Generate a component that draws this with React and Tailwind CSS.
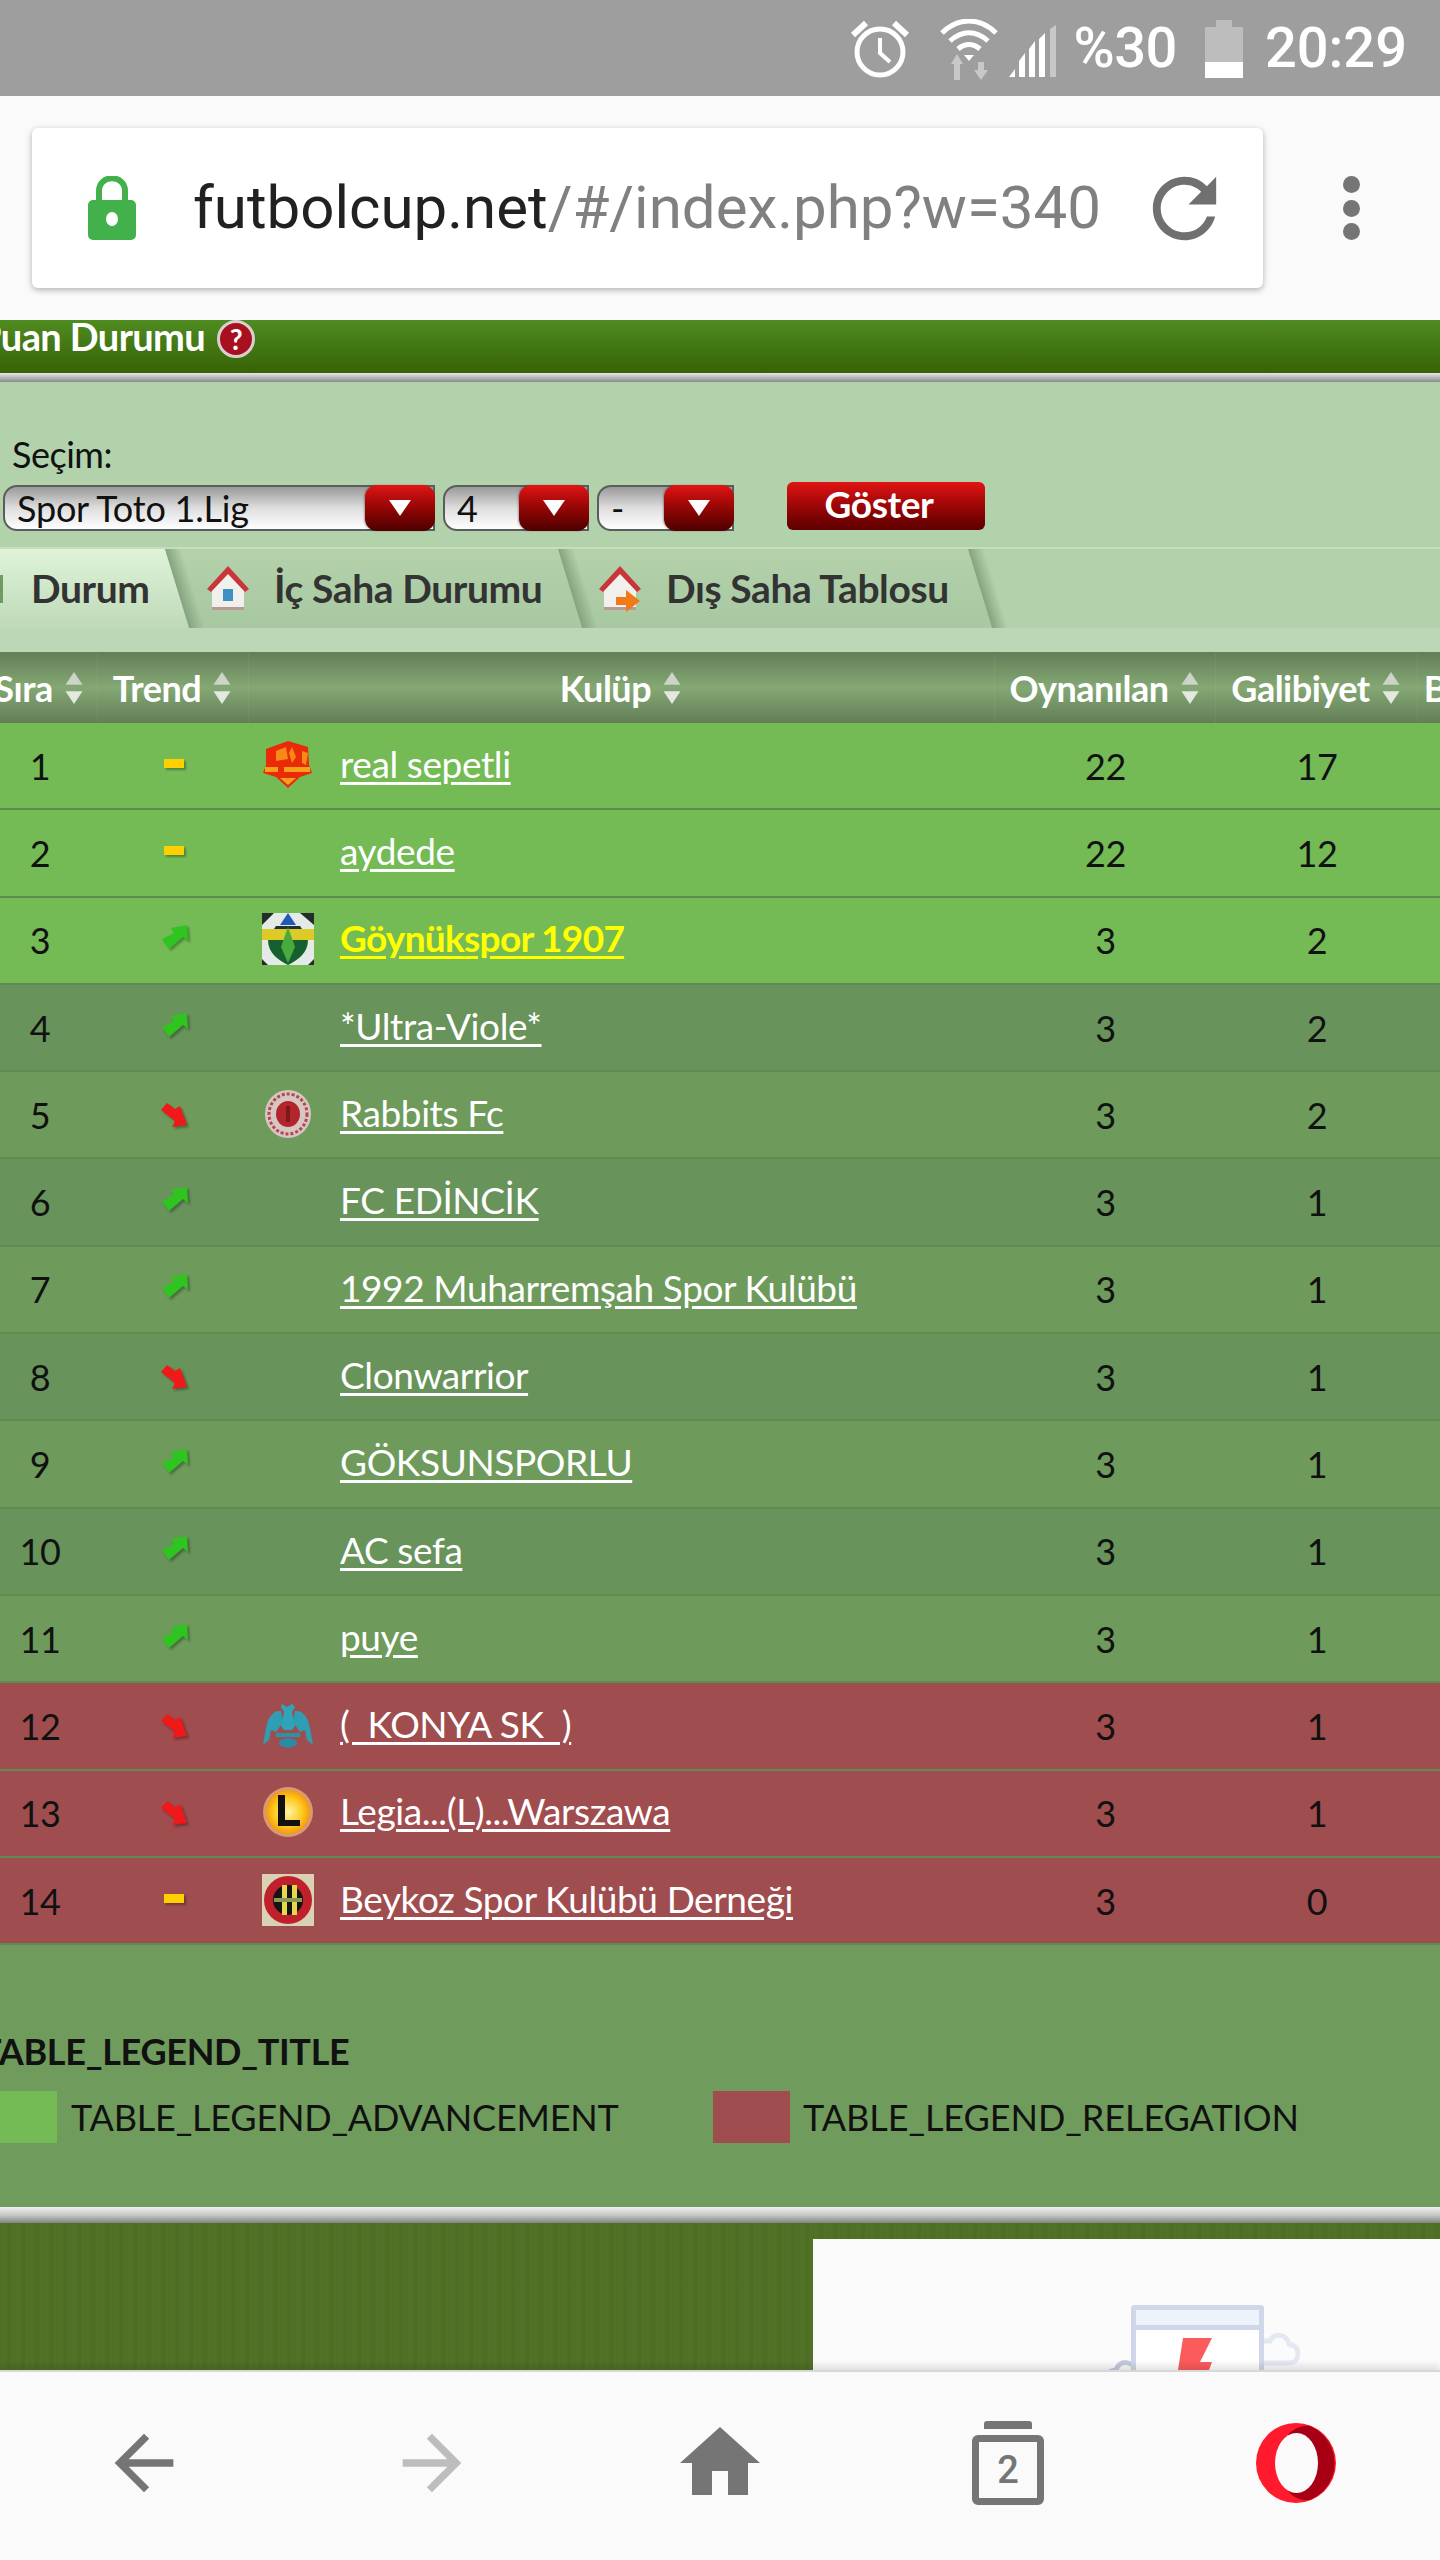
import React from "react";

const rows = [
  { n: 1, trend: "same", crest: "real", name: "real sepetli", o: 22, g: 17, bg: "bg-[#74bb56]" },
  { n: 2, trend: "same", name: "aydede", o: 22, g: 12, bg: "bg-[#74bb56]" },
  { n: 3, trend: "up", crest: "goynuk", name: "Göynükspor 1907", o: 3, g: 2, bg: "bg-[#74bb56]", me: true },
  { n: 4, trend: "up", name: "*Ultra-Viole*", o: 3, g: 2, bg: "bg-[#68935a]" },
  { n: 5, trend: "down", crest: "rabbits", name: "Rabbits Fc", o: 3, g: 2, bg: "bg-[#6e9b5b]" },
  { n: 6, trend: "up", name: "FC EDİNCİK", o: 3, g: 1, bg: "bg-[#68935a]" },
  { n: 7, trend: "up", name: "1992 Muharremşah Spor Kulübü", o: 3, g: 1, bg: "bg-[#6e9b5b]" },
  { n: 8, trend: "down", name: "Clonwarrior", o: 3, g: 1, bg: "bg-[#68935a]" },
  { n: 9, trend: "up", name: "GÖKSUNSPORLU", o: 3, g: 1, bg: "bg-[#6e9b5b]" },
  { n: 10, trend: "up", name: "AC sefa", o: 3, g: 1, bg: "bg-[#68935a]" },
  { n: 11, trend: "up", name: "puye", o: 3, g: 1, bg: "bg-[#6e9b5b]" },
  { n: 12, trend: "down", crest: "konya", name: "(  KONYA SK  )", o: 3, g: 1, bg: "bg-[#9f4d4f]" },
  { n: 13, trend: "down", crest: "legia", name: "Legia...(L)...Warszawa", o: 3, g: 1, bg: "bg-[#9f4d4f]" },
  { n: 14, trend: "same", crest: "beykoz", name: "Beykoz Spor Kulübü Derneği", o: 3, g: 0, bg: "bg-[#9f4d4f]" },
];

function SortIcon() {
  return (
    <svg width="22" height="34" viewBox="0 0 20 32" className="shrink-0 blur-[0.5px]">
      <path d="M10 1 L18 13 H2 Z" fill="#ccd3c8" />
      <path d="M10 31 L18 19 H2 Z" fill="#e4e8e0" />
    </svg>
  );
}

function Trend({ type }) {
  if (type === "same") {
    return <div className="w-[20px] h-[9px] bg-[#fdd000] shadow-[2px_2px_2px_rgba(0,0,0,0.3)] -mt-[4px]" />;
  }
  if (type === "up") {
    return (
      <svg width="28" height="26" viewBox="0 0 28 26" className="blur-[0.4px] drop-shadow-[2px_2px_1px_rgba(0,0,0,0.3)] -mt-[4px] ml-[3px]">
        <path d="M1 14 L13 8 L10 3 L26 0 L27 16 L22 12 L8 24 Z" fill="#2fc41f" />
      </svg>
    );
  }
  return (
    <svg width="28" height="26" viewBox="0 0 28 26" className="blur-[0.4px] drop-shadow-[2px_2px_1px_rgba(0,0,0,0.3)] -mt-[2px] ml-[3px]">
      <path d="M0 9 L6 2 L14 8 L19 5 L26 24 L11 26 L14 20 Z" fill="#f01818" />
    </svg>
  );
}

function Crest({ type }) {
  if (type === "real") {
    return (
      <svg width="52" height="48" viewBox="0 0 52 48" className="blur-[0.7px]">
        <path d="M4 8 L26 0 L46 6 L47 24 L50 32 L38 36 L26 47 L14 36 L1 32 L4 24 Z" fill="#ea2a08" />
        <path d="M14 10 L24 6 L26 18 L14 20 Z M30 6 L34 16 L30 22 L27 12 Z M40 10 L46 12 L44 24 L40 22 Z" fill="#f58a14" />
        <path d="M3 26 H16 V31 H3 Z M22 26 H48 V31 H22 Z M18 37 H34 L26 44 Z" fill="#f7a01c" />
      </svg>
    );
  }
  if (type === "goynuk") {
    return (
      <svg width="52" height="52" viewBox="0 0 52 52" className="blur-[0.6px]">
        <rect width="52" height="52" fill="#e4eae6" />
        <path d="M0 0 H12 L0 12 Z M52 0 H38 L52 12 Z M0 46 L6 52 H0 Z M52 46 L46 52 H52 Z" fill="#252d2a" />
        <path d="M18 12 L26 0 L34 12 Z" fill="#2658b8" />
        <path d="M14 13 H38 L40 16 H12 Z" fill="#22303a" />
        <path d="M0 16 H52 V27 H0 Z" fill="#dccb26" />
        <path d="M6 27 H46 C46 40 36 47 26 52 C16 47 6 40 6 27 Z" fill="#16602f" />
        <path d="M26 14 L33 34 L26 50 L19 34 Z" fill="#47ab3e" />
      </svg>
    );
  }
  if (type === "rabbits") {
    return (
      <svg width="48" height="50" viewBox="0 0 48 50" className="blur-[0.6px]">
        <ellipse cx="24" cy="25" rx="23" ry="24" fill="#d6c6c4" />
        <ellipse cx="24" cy="25" rx="19" ry="20" fill="none" stroke="#b8474a" strokeWidth="3" strokeDasharray="3 2" />
        <ellipse cx="24" cy="25" rx="12" ry="13" fill="#b3252a" />
        <rect x="22" y="17" width="4" height="16" fill="#7a1a1e" />
      </svg>
    );
  }
  if (type === "konya") {
    return (
      <svg width="52" height="46" viewBox="0 0 52 46" className="blur-[0.6px]">
        <path d="M20 2 L25 5 L30 2 L33 5 L30 10 L33 24 L30 28 H22 L19 24 L22 10 L19 5 Z" fill="#2fa3b8" />
        <path d="M19 9 C12 8 6 14 4 26 L1 43 L7 38 L9 28 L14 30 L21 20 Z M33 9 C40 8 46 14 48 26 L51 43 L45 38 L43 28 L38 30 L31 20 Z" fill="#2f9db3" />
        <path d="M14 31 H38 V35 H14 Z" fill="#2a93a8" />
        <ellipse cx="26" cy="41" rx="9" ry="4.5" fill="#2b8da3" />
      </svg>
    );
  }
  if (type === "legia") {
    return (
      <svg width="52" height="52" viewBox="0 0 52 52" className="blur-[0.4px]">
        <defs>
          <radialGradient id="legia-sun" cx="50%" cy="50%" r="50%">
            <stop offset="0%" stopColor="#fff4a8" />
            <stop offset="65%" stopColor="#fdc91f" />
            <stop offset="100%" stopColor="#f59a0e" />
          </radialGradient>
        </defs>
        <circle cx="26" cy="26" r="25" fill="#d99a72" />
        <circle cx="26" cy="26" r="22" fill="url(#legia-sun)" />
        <path d="M16 9 H23 V34 H38 V40 H16 Z" fill="#111" />
      </svg>
    );
  }
  return (
    <svg width="52" height="52" viewBox="0 0 52 52" className="blur-[0.6px]">
      <rect width="52" height="52" fill="#d9d2b6" />
      <circle cx="26" cy="26" r="24" fill="#c0202c" />
      <circle cx="26" cy="26" r="15" fill="#141414" />
      <path d="M20 11 H25 V41 H20 Z M30 11 H35 V41 H30 Z" fill="#e6d848" />
      <path d="M12 24 H40 V28 H12 Z" fill="#8a9a50" />
    </svg>
  );
}

function HeadCell({ children, className }) {
  return (
    <div className={`flex items-center justify-center gap-[10px] h-full border-r border-white/5 ${className}`}>
      <span>{children}</span>
      <SortIcon />
    </div>
  );
}

function Select({ label, className }) {
  return (
    <div className={`flex h-[46px] rounded-l-[14px] border-2 border-[#5c5c5c] bg-gradient-to-b from-[#9a9a9a] via-[#dedede] to-white ${className}`}>
      <span className="flex-1 pl-[12px] text-[36px] leading-[42px] tracking-[-0.2px] text-[#111]">{label}</span>
      <div className="w-[70px] -mr-[2px] -my-[2px] rounded-[12px] bg-gradient-to-b from-[#e21414] to-[#4e0000] flex items-center justify-center shadow-[-1px_0_2px_rgba(0,0,0,0.3)]">
        <div className="w-0 h-0 border-x-[11px] border-x-transparent border-t-[16px] border-t-white" />
      </div>
    </div>
  );
}

function Tab({ active, width, z, children }) {
  return (
    <div className={`relative h-full flex items-center shrink-0 ${width} ${z}`}>
      <div className={`absolute inset-y-0 left-[-60px] right-0 origin-top skew-x-[17deg] ${active ? "bg-gradient-to-b from-[#dff3d9] to-[#bfdab8]" : "bg-gradient-to-b from-[#b3d2ac] to-[#a8c8a1]"}`}>
        <div className="absolute inset-y-0 left-full w-[16px] bg-gradient-to-r from-[#86a37f] to-transparent" />
      </div>
      <div className="relative flex items-center h-full">{children}</div>
    </div>
  );
}

function House({ arrow }) {
  return (
    <svg width="44" height="48" viewBox="0 0 44 48" className="shrink-0">
      <path d="M6 22 L22 4 L38 22 V42 H6 Z" fill="#f2f0ec" />
      <path d="M6 42 H38 V45 H6 Z" fill="#b79a96" />
      <path d="M1 24 L22 1 L43 24 L39 27 L22 9 L5 27 Z" fill="#c9363a" />
      {arrow ? (
        <path d="M18 32 H28 V25 L42 36 L28 47 V40 H18 Z" fill="#ef7a17" />
      ) : (
        <rect x="17" y="24" width="10" height="12" fill="#3d8fc4" />
      )}
    </svg>
  );
}

export default function App() {
  return (
    <div className="w-[1440px] h-[2560px] overflow-hidden flex flex-col bg-[#fafafa] font-['Lato',sans-serif]">
      {/* status bar */}
      <div className="h-[96px] shrink-0 bg-[#9e9e9e] flex items-center justify-end pr-[33px] text-white font-['Roboto',sans-serif] font-medium text-[56px]">
        <svg width="60" height="60" viewBox="0 0 60 60" fill="none" stroke="white" className="mr-[30px] mt-[2px]">
          <circle cx="30" cy="33" r="23" strokeWidth="5" />
          <path d="M30 19 V34 L40 43" strokeWidth="4" />
          <path d="M3 16 L16 4 M57 16 L44 4" strokeWidth="6" />
        </svg>
        <svg width="58" height="62" viewBox="0 0 58 62" className="mr-[11px] mt-[4px]">
          <path d="M2 14 C18 -2 40 -2 56 14 M10 22 C22 11 36 11 48 22 M18 30 C25 24 33 24 40 30" fill="none" stroke="white" strokeWidth="5" />
          <path d="M24 36 L29 42 L34 36 Z" fill="white" />
          <path d="M17 44 L23 54 H20 V70 H14 V54 H11 Z" fill="#c8c8c8" transform="translate(0,-9)" />
          <path d="M38 48 H44 V56 H48 L41 66 L34 56 H38 Z" fill="#c8c8c8" transform="translate(0,-5)" />
        </svg>
        <svg width="48" height="52" viewBox="0 0 48 52" className="mr-[17px] mt-[6px]">
          <path d="M0 52 L6 44 V52 Z M10 52 V36 L16 28 V52 Z M20 52 V24 L26 16 V52 Z M30 52 V14 L36 8 V52 Z" fill="white" />
          <path d="M41 52 V4 L47 0 V52 Z" fill="#c8c8c8" />
        </svg>
        <span className="tracking-[-0.5px] mr-[28px]">%30</span>
        <div className="w-[38px] h-[58px] mr-[22px] mt-[2px] flex flex-col items-center">
          <div className="w-[16px] h-[7px] bg-[#bdbdbd]" />
          <div className="w-full flex-1 bg-[#bdbdbd]" />
          <div className="w-full h-[16px] bg-white" />
        </div>
        <span>20:29</span>
      </div>

      {/* address bar */}
      <div className="h-[224px] shrink-0 bg-[#fafafa] flex items-center pl-[32px]">
        <div className="w-[1231px] h-[160px] bg-white rounded-[6px] shadow-[0_2px_6px_rgba(0,0,0,0.3)] flex items-center pl-[56px]">
          <svg width="48" height="64" viewBox="0 0 48 64" className="shrink-0">
            <path d="M11 26 V15 C11 -2 37 -2 37 15 V26" fill="none" stroke="#43b14b" strokeWidth="6" />
            <rect x="0" y="24" width="48" height="40" rx="5" fill="#43b14b" />
            <ellipse cx="24" cy="43" rx="6" ry="7" fill="white" />
          </svg>
          <div className="ml-[57px] w-[920px] whitespace-nowrap font-['Roboto',sans-serif] text-[60px] leading-none text-[#808080]">
            <span className="text-[#212121]">futbolcup.net</span>/#/index.php?w=340
          </div>
          <svg width="95" height="95" viewBox="0 0 24 24" className="ml-[24px] shrink-0" fill="#707070">
            <path d="M17.65 6.35A7.958 7.958 0 0 0 12 4c-4.42 0-7.99 3.58-7.99 8s3.57 8 7.99 8c3.73 0 6.84-2.55 7.73-6h-2.08A5.99 5.99 0 0 1 12 18c-3.31 0-6-2.69-6-6s2.69-6 6-6c1.66 0 3.14.69 4.22 1.78L13 11h7V4l-2.35 2.35z" />
          </svg>
        </div>
        <div className="ml-[80px] flex flex-col gap-[6.5px]">
          <div className="w-[17px] h-[17px] rounded-full bg-[#757575]" />
          <div className="w-[17px] h-[17px] rounded-full bg-[#757575]" />
          <div className="w-[17px] h-[17px] rounded-full bg-[#757575]" />
        </div>
      </div>

      {/* title bar */}
      <div className="h-[53px] shrink-0 bg-gradient-to-b from-[#4f8c20] to-[#376206] flex items-start -ml-[22px] gap-[12px] text-white font-bold text-[38px] leading-[32px] tracking-[-0.6px]">
        <span>Puan Durumu</span>
        <div className="w-[38px] h-[38px] rounded-full bg-[#a81020] border-[3px] border-[#d8d0d0] flex items-center justify-center text-[28px] leading-none tracking-normal">?</div>
      </div>
      <div className="h-[9px] shrink-0 bg-gradient-to-b from-[#e8e8e8] to-[#8a8a8a]" />

      {/* filter panel */}
      <div className="h-[165px] shrink-0 bg-[#b2d2ac] flex flex-col px-[3px]">
        <div className="mt-[50px] ml-[9px] text-[36px] leading-[44px] tracking-[-0.5px] text-[#111]">Seçim:</div>
        <div className="flex items-end gap-[8px] mt-[6px]">
          <Select label="Spor Toto 1.Lig" className="w-[432px]" />
          <Select label="4" className="w-[146px]" />
          <Select label="-" className="w-[137px]" />
          <div className="ml-[45px] w-[198px] h-[48px] mb-[1px] pr-[14px] rounded-[6px] bg-gradient-to-b from-[#e21414] to-[#5c0000] text-white font-bold text-[37px] leading-[44px] tracking-[-0.4px] text-center">Göster</div>
        </div>
      </div>

      {/* tabs */}
      <div className="h-[81px] shrink-0 border-t-2 border-[#c5dcbf] bg-[#b2d2ac] flex overflow-hidden">
        <Tab active width="w-[165px]" z="z-30">
          <div className="w-[3px] h-[28px] bg-[#6f9a62] mr-[28px]" />
          <span className="font-bold text-[39px] tracking-[-0.4px] text-[#333]">Durum</span>
        </Tab>
        <Tab width="w-[393px]" z="z-20">
          <div className="pl-[41px] flex items-center gap-[24px]">
            <House />
            <span className="font-bold text-[39px] tracking-[-0.4px] text-[#333] whitespace-nowrap">İç Saha Durumu</span>
          </div>
        </Tab>
        <Tab width="w-[410px]" z="z-10">
          <div className="pl-[40px] flex items-center gap-[24px]">
            <House arrow />
            <span className="font-bold text-[39px] tracking-[-0.4px] text-[#333] whitespace-nowrap">Dış Saha Tablosu</span>
          </div>
        </Tab>
      </div>
      <div className="h-[24px] shrink-0 bg-[#bcd7b5]" />

      {/* table */}
      <div className="shrink-0 w-[1640px] -ml-[18px]">
        <div className="h-[71px] flex bg-gradient-to-b from-[#637e58] via-[#84a874] to-[#637e58] text-white font-bold text-[36px] tracking-[-0.5px]">
          <HeadCell className="w-[116px]">Sıra</HeadCell>
          <HeadCell className="w-[151px]">Trend</HeadCell>
          <HeadCell className="w-[746px]">Kulüp</HeadCell>
          <HeadCell className="w-[221px]">Oynanılan</HeadCell>
          <HeadCell className="w-[202px]">Galibiyet</HeadCell>
          <HeadCell className="w-[204px]">Beraberlik</HeadCell>
        </div>
        {rows.map((r) => (
          <div key={r.n} className={`h-[87.3px] flex items-center border-b-2 border-[#5e8b50] text-[36px] text-[#111] ${r.bg}`}>
            <div className="w-[116px] text-center tracking-[-0.5px]">{r.n}</div>
            <div className="w-[151px] flex justify-center">
              <Trend type={r.trend} />
            </div>
            <div className="w-[746px] flex items-center">
              <div className="w-[91px] pl-[13px] -mt-[2px]">
                <div className="w-[52px] flex justify-center">
                  {r.crest ? <Crest type={r.crest} /> : null}
                </div>
              </div>
              <a className={`underline underline-offset-[4px] text-[37px] -mt-[4px] whitespace-pre ${r.me ? "text-[#ffff00] font-bold tracking-[-0.7px]" : "text-white tracking-[-0.4px]"}`}>{r.name}</a>
            </div>
            <div className="w-[221px] text-center tracking-[-0.5px]">{r.o}</div>
            <div className="w-[202px] text-center tracking-[-0.5px]">{r.g}</div>
          </div>
        ))}
      </div>

      {/* legend */}
      <div className="h-[262px] shrink-0 bg-[#6f9c5c] text-[#111] text-[36px] tracking-[-0.2px] -ml-[12px]">
        <div className="pt-[84px] -ml-[8px] font-bold leading-[44px] tracking-[-0.3px]">TABLE_LEGEND_TITLE</div>
        <div className="flex items-center mt-[17px]">
          <div className="w-[69px] h-[52px] bg-[#74bb56]" />
          <span className="ml-[14px] w-[642px] whitespace-nowrap">TABLE_LEGEND_ADVANCEMENT</span>
          <div className="w-[77px] h-[52px] bg-[#9f4d4f]" />
          <span className="ml-[13px] whitespace-nowrap tracking-[-0.05px]">TABLE_LEGEND_RELEGATION</span>
        </div>
      </div>
      <div className="h-[16px] shrink-0 bg-gradient-to-b from-[#f0f0f0] via-[#c8c8c8] to-[#858585]" />

      {/* grass + ad */}
      <div className="h-[147px] shrink-0 pt-[16px] pl-[813px] bg-[#4f6f25] bg-[repeating-linear-gradient(90deg,#4f6f25_0px,#527327_5px,#4d6c24_9px,#537428_14px)]">
        <div className="h-full overflow-hidden bg-[#fbfbfb] flex items-start pl-[290px] pt-[66px]">
          <svg width="43" height="20" viewBox="0 0 43 20" fill="none" stroke="#c2cbdd" strokeWidth="5" className="shrink-0 mt-[52px] -mr-[15px]">
            <path d="M2 20 C4 14 10 14 13 13 C16 3 30 3 32 14 V20" />
          </svg>
          <div className="relative w-[133px] h-[70px] shrink-0 border-x-[5px] border-t-[5px] rounded-t-[4px] border-[#d0d7e8] bg-white flex flex-col">
            <div className="h-[15px] bg-[#edf3fb] border-b-[5px] box-content border-[#d0d7e8]" />
            <div className="flex justify-center pt-[8px] pr-[6px]">
              <svg width="34" height="32" viewBox="0 0 34 32">
                <path d="M5 0 H34 L22 24 H34 L31 32 H0 Z" fill="#fb5b5b" />
              </svg>
            </div>
          </div>
          <svg width="36" height="34" viewBox="0 0 36 34" fill="none" stroke="#e3e8f3" strokeWidth="5" className="shrink-0 mt-[27px]">
            <path d="M0 9 H6 C10 1 22 1 25 12 C32 13 36 19 33 26 C32 30 28 31 24 31 H0" />
          </svg>
        </div>
      </div>

      {/* bottom bar */}
      <div className="relative flex-1 bg-[#fafafa] border-t-2 border-[#d8d8d8] shadow-[0_-5px_6px_rgba(0,0,0,0.1)] flex items-center pb-[6px]">
        <div className="w-[288px] flex justify-center">
          <svg width="88" height="88" viewBox="0 0 24 24" fill="#757575"><path d="M20 11H7.83l5.59-5.59L12 4l-8 8 8 8 1.41-1.41L7.83 13H20v-2z" /></svg>
        </div>
        <div className="w-[288px] flex justify-center">
          <svg width="88" height="88" viewBox="0 0 24 24" fill="#bdbdbd"><path d="M12 4l-1.41 1.41L16.17 11H4v2h12.17l-5.58 5.59L12 20l8-8z" /></svg>
        </div>
        <div className="w-[288px] flex justify-center">
          <svg width="96" height="96" viewBox="0 0 24 24" fill="#757575"><path d="M10 20v-6h4v6h5v-8h3L12 3 2 12h3v8z" /></svg>
        </div>
        <div className="w-[288px] flex flex-col items-center">
          <div className="w-[48px] h-[8px] bg-[#757575] rounded-t-[3px] mb-[6px]" />
          <div className="w-[72px] h-[70px] border-[7px] border-[#757575] rounded-[6px] flex items-center justify-center font-['Roboto',sans-serif] font-medium text-[38px] text-[#757575] leading-none">2</div>
        </div>
        <div className="w-[288px] flex justify-center">
          <svg width="80" height="80" viewBox="0 0 80 80">
            <circle cx="40" cy="40" r="40" fill="#ff1b2d" />
            <path d="M32 12 C38 4 52 1 56 4 A40 40 0 0 1 56 76 C50 79 38 76 32 68 Z" fill="#a70014" />
            <ellipse cx="40.5" cy="40" rx="21.5" ry="30" fill="#fafafa" />
          </svg>
        </div>
      </div>
    </div>
  );
}
